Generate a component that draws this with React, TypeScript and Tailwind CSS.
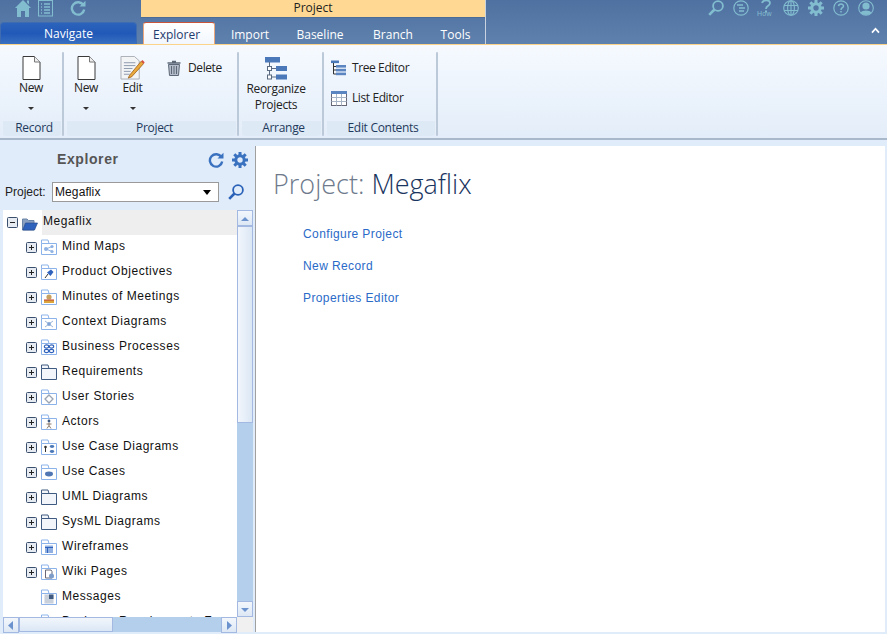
import React from "react";

const C = "#82bccf";
const Home = () => (<svg width="16" height="17" viewBox="0 0 16 17"><path d="M8 0 L16 8 L14 8 L14 17 L10 17 L10 11 L6 11 L6 17 L2 17 L2 8 L0 8 Z M12 0.5 h2 v4 l-2 -2 Z" fill={C}/></svg>);
const ListDoc = () => (<svg width="15" height="17" viewBox="0 0 15 17" fill="none" stroke={C}><rect x="0.5" y="0.5" width="14" height="15.5"/><path d="M3 4h1M6 4h6M3 7h1M6 7h6M3 10h1M6 10h6M3 13h1M6 13h6" strokeWidth="1.4"/></svg>);
const Refresh = ({ color = C, s = 16 }: { color?: string; s?: number }) => (<svg width={s} height={s} viewBox="0 0 16 16" fill="none"><path d="M13.4 5.2 A6.2 6.2 0 1 0 14.2 9.5" stroke={color} strokeWidth="2.4"/><path d="M9.5 6.5 L15.5 6.5 L15.5 0.8 Z" fill={color}/></svg>);
const Search = ({ color = C, s = 16 }: { color?: string; s?: number }) => (<svg width={s} height={s} viewBox="0 0 16 16" fill="none"><circle cx="10" cy="6" r="4.9" stroke={color} strokeWidth="1.8"/><path d="M6.5 9.5 L1.2 14.8" stroke={color} strokeWidth="2.6"/></svg>);
const Gear = ({ color = C, s = 16 }: { color?: string; s?: number }) => (<svg width={s} height={s} viewBox="0 0 16 16" fill="none"><circle cx="8" cy="8" r="4.2" stroke={color} strokeWidth="3"/><g stroke={color} strokeWidth="3"><path d="M8 0v3M8 13v3M0 8h3M13 8h3M2.3 2.3l2.1 2.1M11.6 11.6l2.1 2.1M2.3 13.7l2.1-2.1M11.6 4.4l2.1-2.1"/></g></svg>);
const CircleLines = () => (<svg width="16" height="16" viewBox="0 0 16 16" fill="none" stroke={C}><circle cx="8" cy="8" r="7.2" strokeWidth="1.2"/><path d="M4 5h6M6 8h6M6 11h5" strokeWidth="1.5"/></svg>);
const How = () => (<div className="relative w-[16px] h-[16px]"><svg width="16" height="13" viewBox="0 0 16 13" fill="none"><path d="M4 3 C5 -0.5 12 -0.5 12 3 C12 6 8 5.5 8 9" stroke={C} strokeWidth="1.8"/><rect x="7" y="10.5" width="2" height="2" fill={C}/></svg><span className="absolute left-[-1px] top-[10px] text-[7px] leading-[7px] tracking-[0.3px] font-['Liberation_Sans',sans-serif]" style={{ color: C }}>How</span></div>);
const Globe = () => (<svg width="16" height="16" viewBox="0 0 16 16" fill="none" stroke={C} strokeWidth="1.1"><circle cx="8" cy="8" r="7.3"/><ellipse cx="8" cy="8" rx="3.4" ry="7.3"/><path d="M8 0.7V15.3M1 5.5H15M1 10.5H15"/></svg>);
const Help = () => (<svg width="16" height="16" viewBox="0 0 16 16" fill="none" stroke={C}><circle cx="8" cy="8" r="7.2" strokeWidth="1.2"/><path d="M5.5 6.2 C5.8 3.4 10.5 3.4 10.5 6 C10.5 7.8 8 7.6 8 10" strokeWidth="1.5"/><path d="M8 11v1.6" strokeWidth="1.5"/></svg>);
const User = () => (<svg width="16" height="16" viewBox="0 0 16 16" fill="none"><circle cx="8" cy="8" r="7.3" stroke={C} strokeWidth="1.1"/><circle cx="8" cy="6" r="3.6" fill={C}/><path d="M2.6 12.8 C4 9.6 12 9.6 13.4 12.8 C11 15.8 5 15.8 2.6 12.8 Z" fill={C}/></svg>);

const Page = () => (<svg width="19" height="24" viewBox="0 0 19 24"><path d="M1 0.5 H12.5 L18 6 V23.5 H1 Z" fill="#fff" stroke="#3a3a3a"/><path d="M12.5 0.5 V6 H18" fill="#eee" stroke="#777"/></svg>);
const EditIcon = () => (<svg width="25" height="24" viewBox="0 0 26 25"><path d="M1 0.5 H15 L20 5 V24 H1 Z" fill="#f3f4f6" stroke="#a8acb4"/><path d="M4 7h12M4 10h12M4 13h9M4 16h7M4 19h6" stroke="#8a98ac"/><path d="M10 20 L8.5 23 L12 21.8 L24.5 8 L22 5.5 Z" fill="#eaa93c" stroke="#9a5b18" strokeWidth="0.8"/><path d="M22 5.5 L24.5 8 L25.7 6.6 L23.3 4.2 Z" fill="#d9503f"/></svg>);
const Trash = () => (<svg width="14" height="16" viewBox="0 0 14 16"><path d="M5 1.5 h4 M0.5 3 H13.5" stroke="#5c6878" strokeWidth="1.6"/><path d="M1.5 4.5 H12.5 L11.5 15.5 H2.5 Z" fill="#b3bcc8" stroke="#5c6878"/><path d="M4.5 6v8M7 6v8M9.5 6v8" stroke="#5c6878"/></svg>);
const Reorg = () => (<svg width="22" height="24" viewBox="0 0 22 24"><rect x="0" y="0" width="15" height="5.5" fill="#4a78b8"/><path d="M4.5 5 V20 M5 11.5 H11 M5 20 H11" stroke="#5a6a80"/><rect x="2.5" y="9.5" width="4" height="4" fill="#fff" stroke="#5a6a80"/><rect x="2.5" y="18" width="4" height="4" fill="#fff" stroke="#5a6a80"/><rect x="11" y="9" width="11" height="5" fill="#4a78b8"/><rect x="11" y="17.5" width="11" height="5" fill="#4a78b8"/></svg>);
const TreeEd = () => (<svg width="15" height="16" viewBox="0 0 15 16"><rect x="0" y="0.5" width="8" height="2.6" fill="#4a78b8"/><path d="M2.5 3 V14 M2.5 6.5 H6 M2.5 10 H6 M2.5 14 H6" stroke="#333"/><rect x="5" y="5" width="10" height="2.6" fill="#5b85c0"/><rect x="5" y="8.8" width="10" height="2.6" fill="#5b85c0"/><rect x="5" y="12.6" width="10" height="2.6" fill="#5b85c0"/></svg>);
const ListEd = () => (<svg width="16" height="15" viewBox="0 0 16 15" fill="none"><rect x="0.5" y="0.5" width="15" height="14" fill="#fff" stroke="#667"/><rect x="0" y="0" width="16" height="3" fill="#5b85c0"/><path d="M0.5 6.5H15.5M0.5 10.5H15.5M5.5 3V14.5M10.5 3V14.5" stroke="#a6b4c6"/></svg>);

const Caret = () => (<div className="w-0 h-0 border-x-[3.5px] border-x-transparent border-t-[3.5px] border-t-[#333]" />);

const Folder = ({ children, plain, open }: { children?: React.ReactNode; plain?: boolean; open?: boolean }) => {
  if (open)
    return (<svg width="16" height="14" viewBox="0 0 16 14"><path d="M0.5 2 H5 L6.5 3.5 H12 V13 H0.5 Z" fill="#8aa0c0" stroke="#6a84a8"/><path d="M3.5 6 H15.5 L12.5 13 H0.8 Z" fill="#2f62bc" stroke="#2a4f90" strokeWidth="0.7"/></svg>);
  const stroke = plain ? "#3f5a80" : "#8cb2ea";
  return (
    <svg width="16" height="16" viewBox="0 0 16 16">
      <path d="M0.5 4.5 V1 H7 L8 4.5 H15.5 V15.5 H0.5 Z" fill={plain ? "#f2f5f9" : "#fff"} stroke={stroke} />
      <path d="M0.5 4.5 H8" stroke={stroke} />
      {children}
    </svg>
  );
};
const Plus = ({ minus }: { minus?: boolean }) => (
  <svg width="11" height="11" viewBox="0 0 11 11" className="shrink-0"><rect x="0.5" y="0.5" width="10" height="10" rx="1" fill="#e6ebf2" stroke="#3a4f6e" /><path d={minus ? "M3 5.5H8" : "M3 5.5H8M5.5 3V8"} stroke="#222" /></svg>
);

const g = {
  share: <g fill="#8fb2e4"><circle cx="5" cy="10" r="2" /><circle cx="11" cy="7.5" r="1.6" /><circle cx="11" cy="12.5" r="1.6" /><path d="M5 10L11 7.5M5 10L11 12.5" stroke="#8fb2e4" /></g>,
  pin: <g><path d="M4 14 L7 10" stroke="#333" /><path d="M6 8.5 L10 5.5 L12.5 8 L9.5 12 Z" fill="#2f62bc" /></g>,
  meet: <g><rect x="3" y="11" width="10" height="3" fill="#d9a53c" /><circle cx="8" cy="8" r="2.6" fill="#c8a060" /><path d="M3 11h10" stroke="#c03a2e" /></g>,
  ctx: <g stroke="#9ab6dc" fill="none"><path d="M4 7L12 13M12 7L4 13" /><circle cx="8" cy="10" r="1.7" fill="#7fa2d4" /></g>,
  bp: <g fill="none" stroke="#2f62bc" strokeWidth="1.1"><ellipse cx="5.5" cy="7.5" rx="2.2" ry="1.6" /><ellipse cx="10.5" cy="7.5" rx="2.2" ry="1.6" /><ellipse cx="5.5" cy="12" rx="2.2" ry="1.6" /><ellipse cx="10.5" cy="12" rx="2.2" ry="1.6" /></g>,
  story: <g fill="none" stroke="#9aa4b2" strokeWidth="1.3"><path d="M8 6L12 10L8 14L4 10Z" /></g>,
  actor: <g stroke="#8a7a6a" fill="none"><circle cx="8" cy="7" r="1.4" fill="#3f5a80" stroke="none" /><path d="M8 8.5V11.5M5.5 10H10.5M8 11.5L6 14.5M8 11.5L10 14.5" /></g>,
  ucd: <g><circle cx="4.5" cy="8" r="1.3" fill="#333" /><path d="M4.5 9V13" stroke="#333" /><ellipse cx="11" cy="7.5" rx="2.2" ry="1.4" fill="#4a78b8" /><ellipse cx="11" cy="12.5" rx="2.2" ry="1.4" fill="#4a78b8" /></g>,
  uc: <ellipse cx="8" cy="10" rx="4" ry="2.4" fill="#5077b4" />,
  wire: <g><rect x="4" y="6.5" width="8" height="7.5" fill="#8fb0e0" /><path d="M4 8.5H12M6.5 8.5V14" stroke="#2f62bc" /></g>,
  wiki: <g><path d="M4.5 6H10L11 7.5V14H4.5Z" fill="#fff" stroke="#667" /><circle cx="10.5" cy="12" r="2.5" fill="#7d9cc8" /></g>,
  msg: <g><rect x="3.5" y="5.5" width="9" height="9" fill="#c8d0dc" /><path d="M8 5.5H12.5V10H8Z" fill="#3f5a80" /></g>,
};

const rows: [string, React.ReactNode | null, boolean?][] = [
  ["Mind Maps", g.share],
  ["Product Objectives", g.pin],
  ["Minutes of Meetings", g.meet],
  ["Context Diagrams", g.ctx],
  ["Business Processes", g.bp],
  ["Requirements", null],
  ["User Stories", g.story],
  ["Actors", g.actor],
  ["Use Case Diagrams", g.ucd],
  ["Use Cases", g.uc],
  ["UML Diagrams", null],
  ["SysML Diagrams", null],
  ["Wireframes", g.wire],
  ["Wiki Pages", g.wiki],
  ["Messages", g.msg, true],
  ["Business Requirements F", g.msg, true],
];

const Sep = () => <div className="w-[2px] h-[84px] ml-[1px] mr-[3px] bg-[#bcc9d8] rounded-sm shrink-0" />;
const Group = ({ w, label, pad, children }: { w: string; label: string; pad: string; children: React.ReactNode }) => (
  <div className={`${w} flex flex-col shrink-0`}>
    <div className="h-[69px] flex">{children}</div>
    <div className={`h-[15px] bg-[#dde9f5] rounded-b-[3px] text-center text-[12px] leading-[14px] text-[#1f3a5c] ${pad}`}>{label}</div>
  </div>
);
const BigBtn = ({ icon, label, className }: { icon: React.ReactNode; label: string; className: string }) => (
  <div className={`flex flex-col items-center pt-[4px] ${className}`}>
    <div className="h-[24px] flex items-end">{icon}</div>
    <div className="leading-[16px] text-[12px] text-[#222]">{label}</div>
    <div className="mt-[11px]"><Caret /></div>
  </div>
);
const SmallBtn = ({ icon, label }: { icon: React.ReactNode; label: string }) => (
  <div className="flex items-center h-[16px]">
    <div className="w-[21px] flex">{icon}</div>
    <span className="text-[12px] leading-[16px] tracking-[-0.4px] text-[#222]">{label}</span>
  </div>
);
const SbBtn = ({ dir }: { dir: "up" | "down" | "left" | "right" }) => {
  const d = { up: "M2 9L6 5L10 9Z", down: "M2 5H10L6 9Z", left: "M8 2V11L3 6.5Z", right: "M4 2V11L9 6.5Z" }[dir];
  return (
    <div className="w-[16px] h-[16px] shrink-0 bg-gradient-to-b from-[#f3f7fc] to-[#dde8f5] border border-[#a4b9e2] flex items-center justify-center">
      <svg width="12" height="13" viewBox="0 0 12 13"><path d={d} fill="#6d93cf" /></svg>
    </div>
  );
};

export default function App() {
  return (
    <div className="w-[887px] h-[634px] overflow-hidden flex flex-col bg-[#e1ecfa] font-['Open_Sans','Noto_Sans',sans-serif]">
      {/* Title bar */}
      <div className="h-[45px] shrink-0 flex bg-gradient-to-b from-[#4f71a1] to-[#5f81ad] border-b border-[#fbd48a]">
        <div className="w-[141px] shrink-0 flex flex-col">
          <div className="h-[22px] flex items-start pl-[15px]">
            <Home />
            <div className="ml-[7px]"><ListDoc /></div>
            <div className="ml-[17px]"><Refresh /></div>
          </div>
          <div className="w-[137px] h-[22px] rounded-t-[4px] border border-b-0 border-[#3f6cb0] bg-gradient-to-b from-[#2c63bb] via-[#2159b8] to-[#3a70c0] text-center text-[12px] leading-[21px] text-white">Navigate</div>
        </div>
        <div className="w-[345px] shrink-0 flex flex-col border-r border-[#c9d3e0]">
          <div className="h-[18px] bg-[#ffd993] border-b border-[#4c6b97] text-center text-[12px] leading-[16px] text-[#222]">Project</div>
          <div className="flex-1 flex items-end pl-[2px] text-[12px] text-white">
            <div className="w-[72px] h-[22px] rounded-t-[3px] border border-b-0 border-t-[#c8553a] border-x-[#eda77c] bg-gradient-to-b from-[#ffffff] to-[#f2f7fe] pl-[9px] leading-[23px] text-[#1f3a6c]">Explorer</div>
            <div className="ml-[15px] w-[40px] h-[22px] leading-[25px] text-center">Import</div>
            <div className="ml-[26px] w-[48px] h-[22px] leading-[25px] text-center">Baseline</div>
            <div className="ml-[29px] w-[40px] h-[22px] leading-[25px] text-center">Branch</div>
            <div className="ml-[27px] w-[31px] h-[22px] leading-[25px] text-center">Tools</div>
          </div>
        </div>
        <div className="flex-1 flex flex-col items-end pr-[13px]">
          <div className="h-[26px] flex items-start gap-[9px]">
            <Search /><CircleLines /><How /><Globe /><Gear /><Help /><User />
          </div>
          <div className="mr-[-6px] mt-[1px]">
            <svg width="9" height="7" viewBox="0 0 10 8"><path d="M1 6.5 L5 2 L9 6.5" fill="none" stroke="#fff" strokeWidth="2" /></svg>
          </div>
        </div>
      </div>
      {/* Ribbon */}
      <div className="h-[95px] shrink-0 bg-gradient-to-b from-[#f6faff] to-[#e3edf9] border-b-[2px] border-[#a9b8ca] flex pl-[3px] pt-[7px] tracking-[-0.3px]">
        <Group w="w-[58px]" pad="pl-[4px]" label="Record">
          <BigBtn className="w-[56px]" icon={<Page />} label="New" />
        </Group>
        <Sep />
        <Group w="w-[169px]" pad="pl-[6px]" label="Project">
          <BigBtn className="ml-[8px] w-[22px]" icon={<Page />} label="New" />
          <BigBtn className="ml-[16px] w-[39px]" icon={<EditIcon />} label="Edit" />
          <div className="ml-[15px] pt-[8px]"><SmallBtn icon={<Trash />} label="Delete" /></div>
        </Group>
        <Sep />
        <Group w="w-[79px]" pad="pl-[4px]" label="Arrange">
          <div className="w-[68px] flex flex-col items-center pt-[5px]">
            <Reorg />
            <div className="text-[12px] leading-[16px] text-center text-[#222]">Reorganize<br />Projects</div>
          </div>
        </Group>
        <Sep />
        <Group w="w-[108px]" pad="pl-[4px]" label="Edit Contents">
          <div className="flex flex-col pl-[4px] pt-[8px] gap-[14px]">
            <SmallBtn icon={<TreeEd />} label="Tree Editor" />
            <SmallBtn icon={<ListEd />} label="List Editor" />
          </div>
        </Group>
        <Sep />
      </div>
      {/* Body */}
      <div className="flex-1 flex min-h-0 pt-[6px] pb-[2px] pr-[2px]">
        <div className="w-[255px] shrink-0 flex flex-col font-['Liberation_Sans',sans-serif]">
          <div className="h-[16px] flex items-center">
            <div className="w-[205px] pl-[57px] text-[14px] font-bold tracking-[0.6px] leading-[16px] text-[#555] mt-[10px]">Explorer</div>
            <div className="ml-[3px] flex items-center gap-[8px] mt-[12px]">
              <Refresh color="#3a72c0" />
              <Gear color="#3a72c0" />
            </div>
          </div>
          <div className="mt-[20px] h-[20px] flex items-center pl-[5px]">
            <span className="w-[47px] text-[12px] text-[#222]">Project:</span>
            <div className="w-[167px] h-[20px] bg-white border border-[#9a9a9a] flex items-center justify-between pl-[2px] pr-[7px]">
              <span className="text-[12px] tracking-[0.1px] text-[#111]">Megaflix</span>
              <div className="w-0 h-0 border-x-[4.5px] border-x-transparent border-t-[5px] border-t-black" />
            </div>
            <div className="ml-[9px]"><Search color="#2a62b8" /></div>
          </div>
          <div className="mt-[8px] flex-1 min-h-0 flex flex-col">
            <div className="flex flex-1 min-h-0 pl-[3px]">
              <div className="w-[234px] overflow-hidden bg-white text-[12px] tracking-[0.55px] text-[#111]">
                <div className="h-[25px] flex items-center pl-[4px]">
                  <Plus minus />
                  <div className="ml-[4px] mt-[2px]"><Folder open /></div>
                  <div className="ml-[4px] h-full flex-1 bg-[#eeeeee] pl-[1px] leading-[22px]">Megaflix</div>
                </div>
                {rows.map(([t, ic, noPlus]) => (
                  <div key={t} className="h-[25px] flex items-center pl-[23px] whitespace-nowrap">
                    <div className="w-[11px] h-[11px] mb-[1px]">{noPlus ? null : <Plus />}</div>
                    <div className="ml-[4px] mb-[1px]"><Folder plain={!ic}>{ic}</Folder></div>
                    <span className="ml-[5px] leading-[21px] mb-[3px]">{t}</span>
                  </div>
                ))}
              </div>
              <div className="w-[16px] bg-[#b4cfec] flex flex-col">
                <SbBtn dir="up" />
                <div className="h-[197px] bg-gradient-to-r from-[#f2f6fc] to-[#dbe7f5] border border-[#a4b9e2]" />
                <div className="flex-1" />
                <SbBtn dir="down" />
              </div>
            </div>
            <div className="h-[15px] shrink-0 flex pl-[3px]">
              <div className="w-[234px] bg-[#b4cfec] flex">
                <SbBtn dir="left" />
                <div className="w-[94px] h-[15px] bg-gradient-to-b from-[#f2f6fc] to-[#dbe7f5] border border-[#a4b9e2]" />
                <div className="flex-1" />
                <SbBtn dir="right" />
              </div>
              <div className="w-[16px] bg-[#f0f0f0]" />
            </div>
          </div>
        </div>
        <div className="flex-1 bg-white border-l border-[#a0a0a0] pl-[17px] pt-[18px]">
          <div className="text-[27px] leading-[39px] font-light text-[#6e7a8c]">Project: <span className="text-[#1a3560]">Megaflix</span></div>
          <div className="mt-[23px] pl-[30px] flex flex-col gap-[16px] font-['Liberation_Sans',sans-serif] text-[12px] leading-[16px] tracking-[0.4px] text-[#2a6ac8]">
            <div>Configure Project</div>
            <div>New Record</div>
            <div>Properties Editor</div>
          </div>
        </div>
      </div>
    </div>
  );
}
